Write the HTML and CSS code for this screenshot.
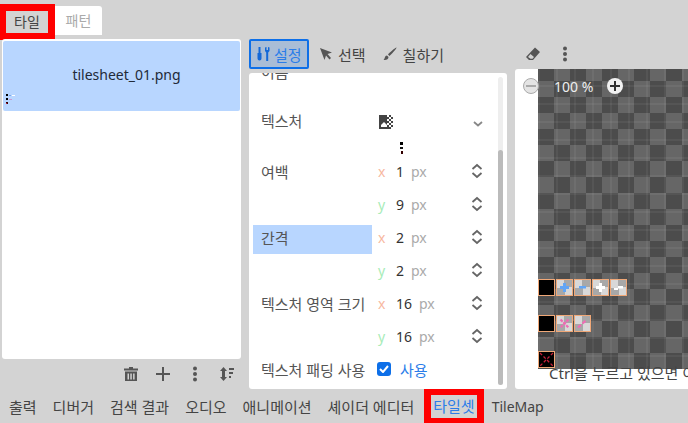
FILE: index.html
```html
<!DOCTYPE html>
<html>
<head>
    <title>타일셋</title>
    <meta charset="utf-8"/>
    <link rel="stylesheet" href="styles.css">
</head>
<body>
    <div class="topTabs">
        <div class="topTab marked">타일</div>
        <div class="topTab idle">패턴</div>
    </div>

    <div class="main">
        <div class="leftCol">
            <div class="sourceList">
                <div class="sourceItem">
                    <span>tilesheet_01.png</span>
                    <svg class="sourceThumb" width="11" height="11" viewBox="0 0 11 11">
                        <rect x="0" y="0" width="2" height="2" fill="#000"/>
                        <rect x="3" y="1" width="2" height="1" fill="#7aa8ee"/>
                        <rect x="6" y="1" width="3" height="1" fill="#fff"/>
                        <rect x="0" y="4" width="2" height="2" fill="#000"/>
                        <rect x="3" y="5" width="3" height="1" fill="#c99bd0"/>
                        <rect x="0" y="8" width="2" height="2" fill="#300"/>
                        <rect x="0" y="9" width="1" height="1" fill="#c02040"/>
                    </svg>
                </div>
            </div>
            <div class="leftTools">
                <svg width="16" height="16" viewBox="0 0 16 16"><path d="M6 1h4v1.500h5V4.500H1V2.500h5zM2 5.500h12V15H2zM4.500 7.500v6h1.500v-6zm2.800 0v6h1.500v-6zm2.800 0v6h1.500v-6z" fill="#555" fill-rule="evenodd"/></svg>
                <svg width="16" height="16" viewBox="0 0 16 16"><path d="M7 1h2v6h6v2H9v6H7V9H1V7h6z" fill="#555"/></svg>
                <svg width="16" height="16" viewBox="0 0 16 16"><circle cx="8" cy="2.500" r="2" fill="#555"/><circle cx="8" cy="8" r="2" fill="#555"/><circle cx="8" cy="13.500" r="2" fill="#555"/></svg>
                <svg width="16" height="16" viewBox="0 0 16 16"><path d="M4.500 1L8 5H6v6h2l-3.500 4L1 11h2V5H1zM10 2h5v2h-5zM10 6h4v2h-4zM10 10h2v2h-2z" fill="#555"/></svg>
            </div>
        </div>

        <div class="midCol">
            <div class="modeBar">
                <div class="modeBtn active">
                    <svg width="14" height="16" viewBox="0 0 14 16"><path d="M1.500 1h2v6h1v5.500a2 2 0 0 1-4 0V7h1zM8 1.500V5l1.200 1.500V15h2V6.500L12.500 5V1.500L11 1v3H9.500V1z" fill="#1268d8"/></svg>
                    <span>설정</span>
                </div>
                <div class="modeBtn">
                    <svg width="14" height="14" viewBox="0 0 14 14"><path d="M1 1l12 4.500-4.500 1.500 3.500 4-1.500 1.500-3.500-4L5.500 13z" fill="#555"/></svg>
                    <span>선택</span>
                </div>
                <div class="modeBtn">
                    <svg width="16" height="16" viewBox="0 0 16 16"><path d="M14.500 1.500c.5.500-5.500 7.500-7 8.500L6 8.500c1-1.500 8-7.500 8.500-7zM5 9.500L6.500 11c0 2-2 3.500-5 3 1.500-1 1-4.500 3.500-4.500z" fill="#555"/></svg>
                    <span>칠하기</span>
                </div>
            </div>
            <div class="settings">
                <div class="row nameRow"><div class="label">이름</div></div>
                <div class="row textureRow">
                    <div class="label">텍스처</div>
                    <svg class="textureIcon" width="14" height="14" viewBox="0 0 14 14">
                        <path d="M0 0h8v2h2v2H8v2h2v2H8v2h2v2h2v2H0z" fill="#444"/>
                        <path d="M10 0h2v2h-2zM12 2h2v2h-2zM10 4h2v2h-2zM12 6h2v2h-2zM10 8h2v2h-2zM12 10h2v2h-2z" fill="#444"/>
                        <path d="M2 10l3-3 3 3v2H2z" fill="#fff"/>
                    </svg>
                    <svg class="chevron" width="10" height="6" viewBox="0 0 10 6"><path d="M1 1l4 3.500L9 1" fill="none" stroke="#888" stroke-width="1.800"/></svg>
                </div>
                <div class="previewRow">
                    <svg width="3" height="12" viewBox="0 0 3 12">
                        <rect x="0" y="0" width="3" height="3" fill="#000"/>
                        <rect x="0" y="5" width="3" height="2" fill="#111"/>
                        <rect x="1" y="9" width="2" height="3" fill="#300"/>
                    </svg>
                </div>

                <div class="row">
                    <div class="label">여백</div>
                    <span class="axis xAxis">x</span><span class="value">1</span><span class="unit">px</span>
                    <svg class="spin" width="12" height="16" viewBox="0 0 12 16"><path d="M1.500 6L6 2l4.500 4M1.500 10L6 14l4.500-4" fill="none" stroke="#666" stroke-width="1.800"/></svg>
                </div>
                <div class="row">
                    <div class="label"></div>
                    <span class="axis yAxis">y</span><span class="value">9</span><span class="unit">px</span>
                    <svg class="spin" width="12" height="16" viewBox="0 0 12 16"><path d="M1.500 6L6 2l4.500 4M1.500 10L6 14l4.500-4" fill="none" stroke="#666" stroke-width="1.800"/></svg>
                </div>
                <div class="row">
                    <div class="label hovered">간격</div>
                    <span class="axis xAxis">x</span><span class="value">2</span><span class="unit">px</span>
                    <svg class="spin" width="12" height="16" viewBox="0 0 12 16"><path d="M1.500 6L6 2l4.500 4M1.500 10L6 14l4.500-4" fill="none" stroke="#666" stroke-width="1.800"/></svg>
                </div>
                <div class="row">
                    <div class="label"></div>
                    <span class="axis yAxis">y</span><span class="value">2</span><span class="unit">px</span>
                    <svg class="spin" width="12" height="16" viewBox="0 0 12 16"><path d="M1.500 6L6 2l4.500 4M1.500 10L6 14l4.500-4" fill="none" stroke="#666" stroke-width="1.800"/></svg>
                </div>
                <div class="row">
                    <div class="label">텍스처 영역 크기</div>
                    <span class="axis xAxis">x</span><span class="value">16</span><span class="unit">px</span>
                    <svg class="spin" width="12" height="16" viewBox="0 0 12 16"><path d="M1.500 6L6 2l4.500 4M1.500 10L6 14l4.500-4" fill="none" stroke="#666" stroke-width="1.800"/></svg>
                </div>
                <div class="row">
                    <div class="label"></div>
                    <span class="axis yAxis">y</span><span class="value">16</span><span class="unit">px</span>
                    <svg class="spin" width="12" height="16" viewBox="0 0 12 16"><path d="M1.500 6L6 2l4.500 4M1.500 10L6 14l4.500-4" fill="none" stroke="#666" stroke-width="1.800"/></svg>
                </div>
                <div class="row">
                    <div class="label">텍스처 패딩 사용</div>
                    <span class="checkbox">
                        <svg width="10" height="8" viewBox="0 0 10 8"><path d="M1 4l3 3 5-6" fill="none" stroke="#fff" stroke-width="2"/></svg>
                    </span>
                    <span class="checkText">사용</span>
                </div>

                <div class="scrollTrack"><div class="scrollThumb"></div></div>
            </div>
        </div>

        <div class="rightCol">
            <div class="viewTools">
                <svg width="16" height="16" viewBox="0 0 16 16"><path d="M10 1.500l5 4.500-7 8H4L1 11zM3 11l2.500 1.800H7.500L9 11 5.500 8z" fill="#555" fill-rule="evenodd"/></svg>
                <svg width="16" height="16" viewBox="0 0 16 16"><circle cx="8" cy="2.500" r="2" fill="#555"/><circle cx="8" cy="8" r="2" fill="#555"/><circle cx="8" cy="13.500" r="2" fill="#555"/></svg>
            </div>
            <div class="viewer">
                <div class="canvasArea">
                    <div class="tileSheet">
                        <div class="tileRow">
                            <div class="tile black"></div>
                            <div class="tile"><svg width="15" height="15" viewBox="0 0 15 15"><path d="M6 3h3v3h3v3H9v3H6V9H3V6h3z" fill="#62a5f5"/></svg></div>
                            <div class="tile"><svg width="15" height="15" viewBox="0 0 15 15"><path d="M4 6h7v2.500H4z" fill="#62a5f5"/></svg></div>
                            <div class="tile"><svg width="15" height="15" viewBox="0 0 15 15"><path d="M6 3h3v3h3v3H9v3H6V9H3V6h3z" fill="#fff"/></svg></div>
                            <div class="tile"><svg width="15" height="15" viewBox="0 0 15 15"><path d="M3 8h4V6h5v2.500H7V10H3z" fill="#fff"/></svg></div>
                        </div>
                        <div class="tileRow">
                            <div class="tile black"></div>
                            <div class="tile"><svg width="15" height="15" viewBox="0 0 15 15"><path d="M3.500 3.500l8 8M11.500 3.500l-8 8" stroke="#ef6cb4" stroke-width="2.200" stroke-dasharray="3 1"/></svg></div>
                            <div class="tile"><svg width="15" height="15" viewBox="0 0 15 15"><path d="M3 11.500L12 3.500" stroke="#ef6cb4" stroke-width="2.200" stroke-dasharray="4 2"/></svg></div>
                        </div>
                        <div class="tileRow">
                            <div class="tile black"><svg width="15" height="15" viewBox="0 0 15 15"><path d="M1 1l13 13M14 1L1 14" stroke="#c8203c" stroke-width="1.300" stroke-dasharray="3 2"/></svg></div>
                        </div>
                    </div>
                    <div class="zoomBar">
                        <span class="zoomBtn off"><svg width="10" height="10" viewBox="0 0 10 10"><path d="M0 4h10v2H0z" fill="#aaa"/></svg></span>
                        <span class="zoomText">100 %</span>
                        <span class="zoomBtn on"><svg width="10" height="10" viewBox="0 0 10 10"><path d="M4 0h2v4h4v2H6v4H4V6H0V4h4z" fill="#333"/></svg></span>
                    </div>
                </div>
                <div class="hint">Ctrl을 누르고 있으면 이</div>
            </div>
        </div>
    </div>

    <div class="bottomTabs">
        <div class="bottomTab">출력</div>
        <div class="bottomTab">디버거</div>
        <div class="bottomTab">검색 결과</div>
        <div class="bottomTab">오디오</div>
        <div class="bottomTab">애니메이션</div>
        <div class="bottomTab">셰이더 에디터</div>
        <div class="bottomTab current">타일셋</div>
        <div class="bottomTab latin">TileMap</div>
    </div>
</body>
</html>
```

FILE: styles.css
```css
body {
    margin: 0;
    width: 688px;
    height: 423px;
    overflow: hidden;
    background-color: #d3d3d3;
    color: #444444;
    font-family: "Noto Sans", "Noto Sans CJK KR", sans-serif;
    font-size: 15px;
}

.topTabs {
    display: flex;
    align-items: flex-start;
    height: 39px;
    padding-top: 4px;
    box-sizing: border-box;
    font-size: 14px;
}

.topTab {
    text-align: center;
    box-sizing: border-box;
}

.topTab.marked {
    width: 55px;
    height: 36px;
    line-height: 22px;
    border: 7px solid #ff0000;
    border-left-width: 6px;
}

.topTab.idle {
    width: 47px;
    height: 29px;
    line-height: 29px;
    margin-top: 2px;
    background-color: #ffffff;
    color: #aaaaaa;
    border-radius: 0 3px 0 0;
}

.main {
    display: flex;
    height: 350px;
}

.leftCol {
    width: 249px;
    padding-left: 2px;
    box-sizing: border-box;
}

.sourceList {
    width: 239px;
    height: 320px;
    padding: 2px 1px;
    box-sizing: border-box;
    background-color: #ffffff;
    border-radius: 3px;
}

.sourceItem {
    position: relative;
    height: 70px;
    padding-left: 10px;
    line-height: 68px;
    text-align: center;
    font-size: 14px;
    color: #222a38;
    background-color: #b8d6ff;
    border-radius: 2px;
}

.sourceThumb {
    position: absolute;
    left: 3px;
    bottom: 6px;
}

.leftTools {
    display: flex;
    justify-content: flex-end;
    gap: 16px;
    height: 30px;
    align-items: center;
    padding-right: 14px;
}

.midCol {
    width: 258px;
}

.modeBar {
    display: flex;
    height: 34px;
    align-items: flex-start;
}

.modeBtn {
    display: flex;
    align-items: center;
    gap: 5px;
    height: 30px;
    padding: 0 6px 0 10px;
    box-sizing: border-box;
}

.modeBtn.active {
    width: 60px;
    padding: 0 0 0 6px;
    gap: 3px;
    color: #2b7de9;
    background-color: #a9bdd6;
    border: 2px solid #0d6fe8;
    border-radius: 2px;
}

.settings {
    position: relative;
    height: 316px;
    overflow: hidden;
    padding-left: 4px;
    box-sizing: border-box;
    background-color: #ffffff;
    border-radius: 3px;
}

.row {
    position: relative;
    display: flex;
    align-items: center;
    height: 33px;
    padding-bottom: 3px;
    box-sizing: border-box;
    font-size: 14px;
}

.nameRow {
    margin-top: -17px;
    margin-bottom: 16px;
}

.textureRow {
    height: 34px;
    padding-bottom: 0;
}

.previewRow {
    display: flex;
    height: 17px;
    padding-left: 147px;
    padding-top: 3px;
    box-sizing: border-box;
}

.label {
    align-self: flex-start;
    width: 119px;
    height: 29px;
    margin: 3px 6px 0 0;
    padding-left: 8px;
    line-height: 26px;
    box-sizing: border-box;
    font-size: 15px;
    color: #555555;
    white-space: nowrap;
    flex-shrink: 0;
}

.label.hovered {
    background-color: #b8d6ff;
}

.axis {
    width: 18px;
}

.xAxis {
    color: #f7b8a0;
}

.yAxis {
    color: #a8ecb8;
}

.value {
    color: #333333;
    margin-right: 7px;
}

.unit {
    color: #aaaaaa;
}

.spin {
    position: absolute;
    left: 218px;
    top: 7px;
}

.textureIcon {
    margin-left: 1px;
}

.chevron {
    margin-left: 80px;
    margin-top: 3px;
}

.checkbox {
    display: flex;
    align-items: center;
    justify-content: center;
    width: 14px;
    height: 14px;
    background-color: #0d6fe8;
    border-radius: 3px;
    margin-left: -1px;
}

.checkText {
    margin-left: 9px;
    font-size: 15px;
    color: #2b7de9;
}

.scrollTrack {
    position: absolute;
    left: 249px;
    top: 4px;
    bottom: 4px;
    width: 5px;
    background-color: #eeeeee;
    border-radius: 3px;
}

.scrollThumb {
    position: absolute;
    left: 0;
    top: 73px;
    bottom: 0;
    width: 5px;
    background-color: #bbbbbb;
    border-radius: 3px;
}

.rightCol {
    width: 173px;
    margin-left: 8px;
}

.viewTools {
    display: flex;
    height: 30px;
    align-items: center;
    gap: 16px;
    padding-left: 10px;
    box-sizing: border-box;
}

.viewer {
    position: relative;
    height: 320px;
    padding-left: 23px;
    overflow: hidden;
    box-sizing: border-box;
    background-color: #ffffff;
    border-radius: 3px 0 0 3px;
}

.canvasArea {
    height: 300px;
    background-color: #4c4c4c;
    background-image:
        repeating-linear-gradient(90deg, rgba(255,255,255,0.05) 0 2px, transparent 2px 18px),
        repeating-linear-gradient(0deg, rgba(255,255,255,0.05) 0 2px, transparent 2px 18px),
        conic-gradient(#666666 25%, #4c4c4c 0 50%, #666666 0 75%, #4c4c4c 0);
    background-size: 18px 18px, 18px 18px, 32px 32px;
    background-position: 0 0, 0 0, 0 -4px;
}

.tileSheet {
    position: absolute;
    left: 23px;
    top: 210px;
    display: flex;
    flex-direction: column;
    gap: 18px;
}

.tileRow {
    display: flex;
    gap: 1px;
    height: 18px;
}

.tile {
    width: 17px;
    height: 17px;
    box-sizing: border-box;
    border: 1px solid #f0a878;
    background-color: #d8d8d8;
    background-image: conic-gradient(#a8a8a8 25%, #d8d8d8 0 50%, #a8a8a8 0 75%, #d8d8d8 0);
    background-size: 15px 15px;
}

.tile svg {
    display: block;
}

.tile.black {
    background: #000000;
}

.zoomBar {
    position: absolute;
    left: 8px;
    top: 8px;
    display: flex;
    align-items: center;
    height: 18px;
    font-size: 14px;
}

.zoomBtn {
    display: flex;
    align-items: center;
    justify-content: center;
    width: 16px;
    height: 16px;
    border-radius: 50%;
}

.zoomBtn.off {
    background-color: #e4e4e4;
    border: 1px solid #aaaaaa;
    box-sizing: border-box;
}

.zoomBtn.on {
    background-color: #f2f2f2;
}

.zoomText {
    width: 68px;
    padding-left: 15px;
    box-sizing: border-box;
    color: #eeeeee;
}

.hint {
    padding-left: 11px;
    line-height: 17px;
    margin-top: -4px;
    white-space: nowrap;
    color: #444444;
}

.bottomTabs {
    display: flex;
    align-items: flex-start;
    height: 34px;
    padding-left: 1px;
    box-sizing: border-box;
}

.bottomTab {
    padding: 0 8px;
    line-height: 36px;
    white-space: nowrap;
}

.bottomTab.latin {
    font-size: 14px;
}

.bottomTab.current {
    height: 35px;
    margin-top: -1px;
    margin-left: 2px;
    padding: 0 2px;
    line-height: 23px;
    border: 7px solid #ff0000;
    border-bottom-width: 5px;
    box-sizing: border-box;
    color: #2b7de9;
}
```
